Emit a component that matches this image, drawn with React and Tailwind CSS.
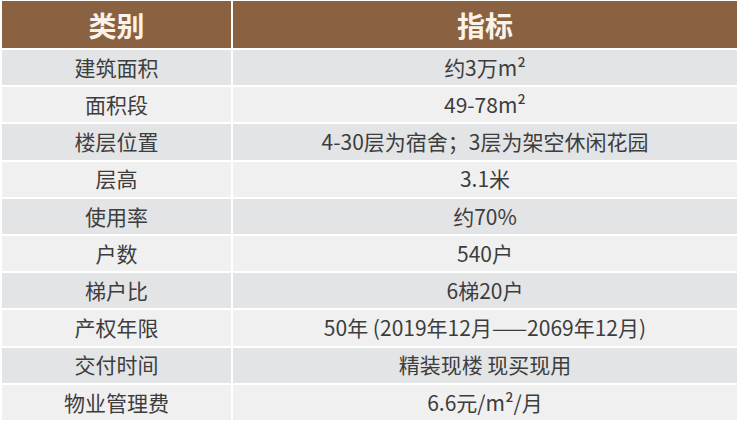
const rows = [
  ["建筑面积", "约3万m²"],
  ["面积段", "49-78m²"],
  ["楼层位置", "4-30层为宿舍；3层为架空休闲花园"],
  ["层高", "3.1米"],
  ["使用率", "约70%"],
  ["户数", "540户"],
  ["梯户比", "6梯20户"],
  ["产权年限", "50年 (2019年12月——2069年12月)"],
  ["交付时间", "精装现楼 现买现用"],
  ["物业管理费", "6.6元/m²/月"],
];

export default function App() {
  return (
    <div
      className="w-[740px] h-[421px] bg-white pl-[2px] pr-[3px] pt-[1px] flex flex-col gap-[2px] overflow-hidden"
      style={{ fontFamily: '"Noto Sans CJK SC", "Noto Sans", sans-serif' }}
    >
      {/* header */}
      <div className="flex gap-[2px] h-[47px] shrink-0">
        <div className="w-[229px] bg-[#8a6242] flex items-center justify-center text-[28px] font-bold text-[#fbf3e8]">
          类别
        </div>
        <div className="flex-1 bg-[#8a6242] flex items-center justify-center text-[28px] font-bold text-[#fbf3e8]">
          指标
        </div>
      </div>

      {rows.map(([k, v], i) => {
        const bg = i % 2 === 0 ? "bg-[#e3e4e6]" : "bg-[#f0f0f0]";
        return (
          <div key={k} className="flex gap-[2px] h-[35.2px] shrink-0">
            <div className={`w-[229px] ${bg} flex items-center justify-center text-[21px] text-[#3d3d3d]`}>
              {k}
            </div>
            <div className={`flex-1 ${bg} flex items-center justify-center text-[21px] text-[#3d3d3d]`}>
              {v}
            </div>
          </div>
        );
      })}
    </div>
  );
}
